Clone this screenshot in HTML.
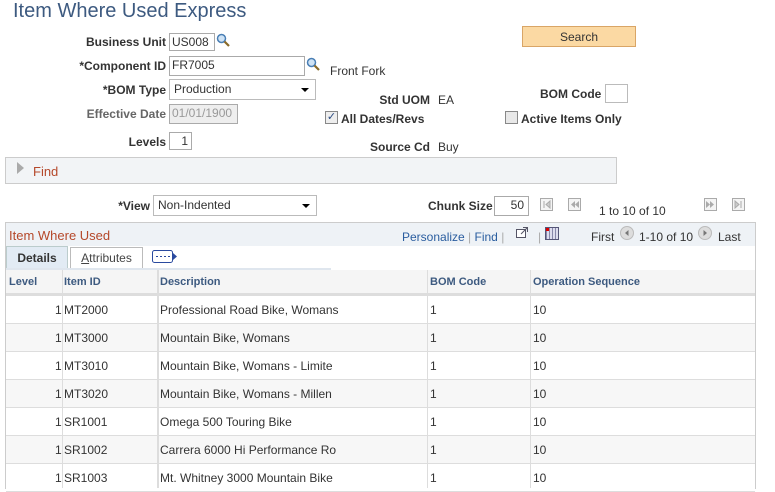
<!DOCTYPE html>
<html><head><meta charset="utf-8"><style>
body{margin:0;width:775px;height:488px;overflow:hidden;background:#fff;font-family:"Liberation Sans",Arial,sans-serif;font-size:12px;color:#333;position:relative}
.a{position:absolute;white-space:nowrap}
.lb{font-weight:bold;color:#333;text-align:right}
.in{position:absolute;border:1px solid #aaa;background:#fff;height:18px;box-sizing:border-box;font-size:12px;line-height:16px;padding-left:2px}
.sel{position:absolute;border:1px solid #bbb;background:#fff;box-sizing:border-box;height:21px;line-height:19px;padding-left:4px}
.sel:after{content:"";position:absolute;right:6px;top:8px;border-left:4px solid transparent;border-right:4px solid transparent;border-top:4px solid #000}
.mag{position:absolute;width:14px;height:14px}
.row{position:absolute;left:6px;width:749px;height:28px;border-bottom:1px solid #ddd;box-sizing:border-box}
.row span{position:absolute;top:7px}
.vl{position:absolute;width:1px;background:#ddd;top:270px;height:218px}
.hd{position:absolute;top:276px;font-weight:bold;color:#3d5a80;font-size:11px}
.pg{position:absolute;width:13px;height:13px;top:198px}
.lk{color:#2a5d9f}
</style></head><body>
<div class="a" style="left:13px;top:0;font-size:20px;color:#3d5a80">Item Where Used Express</div>

<div class="a lb" style="left:60px;width:106px;top:35px">Business Unit</div>
<div class="in" style="left:169px;top:33px;width:46px">US008</div>
<svg class="mag" style="left:216px;top:33px" viewBox="0 0 14 14"><circle cx="5.5" cy="5.5" r="4" fill="#cfe3f5" stroke="#4a7fb5" stroke-width="1.5"/><path d="M8.5 8.5L13 13" stroke="#8a6a2a" stroke-width="2.2"/></svg>

<div class="a lb" style="left:60px;width:106px;top:59px">*Component ID</div>
<div class="in" style="left:169px;top:56px;width:136px;height:20px">FR7005</div>
<svg class="mag" style="left:306px;top:57px" viewBox="0 0 14 14"><circle cx="5.5" cy="5.5" r="4" fill="#cfe3f5" stroke="#4a7fb5" stroke-width="1.5"/><path d="M8.5 8.5L13 13" stroke="#8a6a2a" stroke-width="2.2"/></svg>
<div class="a" style="left:330px;top:64px">Front Fork</div>

<div class="a lb" style="left:60px;width:106px;top:83px">*BOM Type</div>
<div class="sel" style="left:169px;top:79px;width:147px">Production</div>

<div class="a lb" style="left:60px;width:106px;top:107px;color:#666">Effective Date</div>
<div class="in" style="left:169px;top:104px;width:69px;height:20px;background:#eee;color:#999">01/01/1900</div>

<div class="a lb" style="left:60px;width:106px;top:135px">Levels</div>
<div class="in" style="left:169px;top:132px;width:23px;text-align:right;padding-right:3px">1</div>

<div class="a lb" style="left:340px;width:90px;top:93px">Std UOM</div>
<div class="a" style="left:438px;top:93px">EA</div>
<div class="a" style="left:325px;top:111px;width:11px;height:11px;border:1px solid #888;background:#eee;font-size:11px;line-height:11px;text-align:center;color:#2a4a80">✓</div>
<div class="a lb" style="left:341px;top:112px">All Dates/Revs</div>
<div class="a lb" style="left:340px;width:90px;top:140px">Source Cd</div>
<div class="a" style="left:438px;top:140px">Buy</div>

<div class="a" style="left:522px;top:26px;width:112px;height:19px;border:1px solid #d9a566;background:#fbd9a3;text-align:center;line-height:20px;color:#333">Search</div>
<div class="a lb" style="left:540px;top:87px">BOM Code</div>
<div class="in" style="left:605px;top:84px;width:23px;height:19px;border-color:#bbb"></div>
<div class="a" style="left:505px;top:111px;width:11px;height:11px;border:1px solid #888;background:#e8e8e8"></div>
<div class="a lb" style="left:521px;top:112px">Active Items Only</div>

<div class="a" style="left:5px;top:157px;width:610px;height:25px;border:1px solid #ccc;background:#f2f4f6"></div>
<div class="a" style="left:17px;top:162px;border-top:6px solid transparent;border-bottom:6px solid transparent;border-left:7px solid #aaa"></div>
<div class="a" style="left:33px;top:164px;color:#b5482a;font-size:13px">Find</div>

<div class="a lb" style="left:100px;width:50px;top:199px">*View</div>
<div class="sel" style="left:153px;top:195px;width:164px">Non-Indented</div>
<div class="a lb" style="left:428px;top:199px">Chunk Size</div>
<div class="in" style="left:494px;top:196px;width:35px;height:20px;text-align:right;padding-right:4px">50</div>
<svg class="pg" style="left:540px" viewBox="0 0 13 13"><rect x=".5" y=".5" width="12" height="12" fill="#f4f4f4" stroke="#aaa"/><path d="M4 3v7M10 3L6 6.5 10 10z" stroke="#aaa" fill="#ccc"/></svg>
<svg class="pg" style="left:568px" viewBox="0 0 13 13"><rect x=".5" y=".5" width="12" height="12" fill="#f4f4f4" stroke="#aaa"/><path d="M7 3L3 6.5 7 10zM11 3L7 6.5 11 10z" fill="#aaa"/></svg>
<div class="a" style="left:599px;top:204px">1 to 10 of 10</div>
<svg class="pg" style="left:704px" viewBox="0 0 13 13"><rect x=".5" y=".5" width="12" height="12" fill="#f4f4f4" stroke="#aaa"/><path d="M2 3L6 6.5 2 10zM6 3L10 6.5 6 10z" fill="#aaa"/></svg>
<svg class="pg" style="left:732px" viewBox="0 0 13 13"><rect x=".5" y=".5" width="12" height="12" fill="#f4f4f4" stroke="#aaa"/><path d="M9 3v7M3 3L7 6.5 3 10z" stroke="#aaa" fill="#ccc"/></svg>

<div class="a" style="left:5px;top:222px;width:749px;height:266px;border:1px solid #ccc;border-bottom:none"></div>
<div class="a" style="left:6px;top:223px;width:749px;height:23px;background:#eef2f6"></div>
<div class="a" style="left:9px;top:228px;color:#b5482a;font-size:13px">Item Where Used</div>
<div class="a" style="left:402px;top:230px"><span class="lk">Personalize</span> <span style="color:#aaa">|</span> <span class="lk">Find</span> <span style="color:#aaa">|</span></div>
<svg class="a" style="left:515px;top:226px" width="14" height="13" viewBox="0 0 14 13"><rect x="1.5" y="3.5" width="9" height="8" fill="#fff" stroke="#556"/><path d="M6 8L12 2M8 1.5h4.5V6" stroke="#556" fill="none"/></svg>
<div class="a" style="left:538px;top:230px;color:#aaa">|</div>
<div class="a" style="left:545px;top:227px;width:12px;height:11px;background:repeating-linear-gradient(90deg,#88a 0 1px,#dde 1px 3px);border:1px solid #557"></div>
<div class="a" style="left:546px;top:228px;width:3px;height:3px;background:#d00"></div>
<div class="a" style="left:591px;top:230px">First</div>
<svg class="a" style="left:620px;top:226px" width="14" height="14" viewBox="0 0 14 14"><circle cx="7" cy="7" r="6.5" fill="#ddd" stroke="#bbb"/><path d="M8.5 4L5 7l3.5 3z" fill="#777"/></svg>
<div class="a" style="left:639px;top:230px">1-10 of 10</div>
<svg class="a" style="left:698px;top:226px" width="14" height="14" viewBox="0 0 14 14"><circle cx="7" cy="7" r="6.5" fill="#ddd" stroke="#bbb"/><path d="M5.5 4L9 7l-3.5 3z" fill="#777"/></svg>
<div class="a" style="left:718px;top:230px">Last</div>

<div class="a" style="left:6px;top:246px;width:60px;height:22px;background:#e2ebf4;border:1px solid #bcc;border-bottom:none;text-align:center;line-height:22px;font-weight:bold;color:#333">Details</div>
<div class="a" style="left:70px;top:247px;width:71px;height:21px;border:1px solid #bbb;border-bottom:none;text-align:center;line-height:21px;color:#444"><u>A</u>ttributes</div>
<svg class="a" style="left:152px;top:249px" width="26" height="15" viewBox="0 0 26 15"><rect x=".5" y="1.5" width="20" height="12" rx="2" fill="#fff" stroke="#2a4a9f"/><path d="M4 7.5h2M8 7.5h2M12 7.5h2M16 7.5h2" stroke="#2a4a9f"/><path d="M21 4l4 3.5-4 3.5z" fill="#2a4a9f"/></svg>
<div class="a" style="left:6px;top:268px;width:325px;height:2px;background:#dfe6ee"></div>

<div class="a" style="left:6px;top:270px;width:749px;height:26px;background:#f5f5f5;border-bottom:3px solid #ddd;box-sizing:border-box"></div>
<div class="hd" style="left:9px">Level</div>
<div class="hd" style="left:64px">Item ID</div>
<div class="hd" style="left:160px">Description</div>
<div class="hd" style="left:430px">BOM Code</div>
<div class="hd" style="left:533px">Operation Sequence</div>

<div class="row" style="top:296px;background:#fff"><span style="left:49px">1</span><span style="left:58px">MT2000</span><span style="left:154px">Professional Road Bike, Womans</span><span style="left:424px">1</span><span style="left:527px">10</span></div>
<div class="row" style="top:324px;background:#f7f7f7"><span style="left:49px">1</span><span style="left:58px">MT3000</span><span style="left:154px">Mountain Bike, Womans</span><span style="left:424px">1</span><span style="left:527px">10</span></div>
<div class="row" style="top:352px;background:#fff"><span style="left:49px">1</span><span style="left:58px">MT3010</span><span style="left:154px">Mountain Bike, Womans - Limite</span><span style="left:424px">1</span><span style="left:527px">10</span></div>
<div class="row" style="top:380px;background:#f7f7f7"><span style="left:49px">1</span><span style="left:58px">MT3020</span><span style="left:154px">Mountain Bike, Womans - Millen</span><span style="left:424px">1</span><span style="left:527px">10</span></div>
<div class="row" style="top:408px;background:#fff"><span style="left:49px">1</span><span style="left:58px">SR1001</span><span style="left:154px">Omega 500 Touring Bike</span><span style="left:424px">1</span><span style="left:527px">10</span></div>
<div class="row" style="top:436px;background:#f7f7f7"><span style="left:49px">1</span><span style="left:58px">SR1002</span><span style="left:154px">Carrera 6000 Hi Performance Ro</span><span style="left:424px">1</span><span style="left:527px">10</span></div>
<div class="row" style="top:464px;background:#fff"><span style="left:49px">1</span><span style="left:58px">SR1003</span><span style="left:154px">Mt. Whitney 3000 Mountain Bike</span><span style="left:424px">1</span><span style="left:527px">10</span></div>

<div class="vl" style="left:62px"></div>
<div class="vl" style="left:157px;width:2px"></div>
<div class="vl" style="left:427px"></div>
<div class="vl" style="left:530px"></div>
</body></html>
